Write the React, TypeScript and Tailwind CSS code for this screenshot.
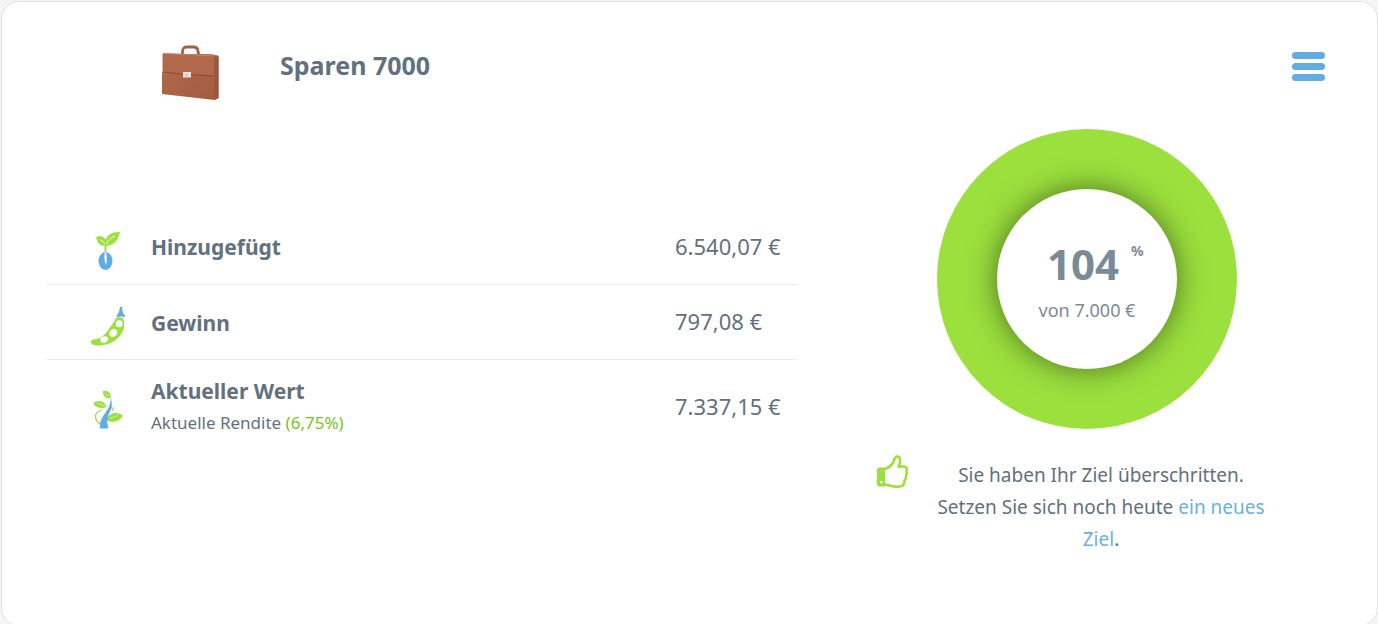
import type { ReactNode } from "react";

function Briefcase() {
  return (
    <svg viewBox="0 0 60 56" className="h-14 w-15" aria-hidden="true">
      <defs>
        <linearGradient id="leather" x1="0" y1="0" x2="1" y2="1">
          <stop offset="0" stopColor="#b06a4b" />
          <stop offset="1" stopColor="#a35c40" />
        </linearGradient>
      </defs>
      <path d="M22.500 10V7q0-5 4-5h7q4 0 4.500 4l.8 4" fill="none" stroke="#a66144" strokeWidth="2.800" />
      <path d="M2.500 8.500 53 9.500 58.500 11V53l-4 2L2 49V28L3 27Z" fill="url(#leather)" />
      <path d="M54.500 10 58.500 11V53l-4 2Z" fill="#995740" />
      <path d="M3 8.500 53 9.500 54 31 31 30 2.500 26.500Z" fill="#b0694a" />
      <path d="M2.500 27 26 29.500 54 31" fill="none" stroke="#8a4832" strokeWidth=".9" />
      <path d="M3 8.700 57 11" stroke="#c58467" strokeWidth=".9" />
      <rect x="23" y="27" width="8" height="5.500" fill="#e9e2de" />
      <path d="M25 30h3" stroke="#b3a9a4" />
    </svg>
  );
}

function Sprout() {
  return (
    <svg viewBox="0 0 50 54" className="h-[54px] w-[50px]" aria-hidden="true">
      <path d="M12 13c5-2 11 0 11 8-7 2-9-1-11-8Z" fill="#9be03d" />
      <path d="M36 8c-9 0-16 3-14 14 9-1 12-6 14-14Z" fill="#9be03d" />
      <path d="M22 21q2-6 9-9M21 20q-2-3-5-4.500" fill="none" stroke="#fff" strokeWidth=".8" />
      <path d="M21.500 28v-8" fill="none" stroke="#9be03d" strokeWidth="2" />
      <ellipse cx="21.500" cy="37" rx="7" ry="9" fill="#60ace3" />
      <path d="M21 28q-1.500 7 .8 13 2-6 0-13" fill="#fff" />
    </svg>
  );
}

function Pod() {
  return (
    <svg viewBox="0 0 50 54" className="h-[54px] w-[50px]" aria-hidden="true">
      <path d="M36 7h2l.6 5 2.900 5q-4-1-9.500 0l3-5Z" fill="#60ace3" />
      <path d="M32 18q3-1.500 7 0c2.500 6 1.500 13-4 19-5 6-13 8.500-22 8.500-5 0-7-3-5.500-5 1-1 3-1 5-1.500 5-1 10-5.500 13-11 2-3 5-6 6.500-10Z" fill="#9be03d" />
      <circle cx="35.200" cy="23.700" r="3.500" fill="#fff" />
      <ellipse cx="29.300" cy="33" rx="4.300" ry="3.600" transform="rotate(-50 29.300 33)" fill="#fff" />
      <ellipse cx="20.300" cy="39.500" rx="4.100" ry="3.100" transform="rotate(-20 20.300 39.500)" fill="#fff" />
    </svg>
  );
}

function Vine() {
  return (
    <svg viewBox="0 0 50 56" className="h-14 w-[50px]" aria-hidden="true">
      <path d="M19 9c5-1 8 2 8 7-5 1-8-1-8-7Z" fill="#9be03d" />
      <path d="M9 21c7-4 11-2 14 4-6 2-11 1-14-4Z" fill="#9be03d" />
      <path d="M39 33.500c-5-4-14-4-17 4.500 8 4 14 1 17-4.500Z" fill="#9be03d" />
      <path d="M18 28q-7 2-6.500 7 .5 5 5 7M26 25q4 1 3 4" fill="none" stroke="#9be03d" strokeWidth="1.300" />
      <path d="M26.300 14c3 9 1 14-1.500 18-2 4-2 9-.3 14.500h-8.500c-1-6 2-11 5.500-16s6-9 4.800-16.500Z" fill="#60ace3" />
      <path d="M21 11l5 4M13 21l8 3M34 33.500l-8 3" stroke="#fff" strokeWidth=".5" />
    </svg>
  );
}

function ThumbUp() {
  return (
    <svg viewBox="0 0 32 34" className="h-[34px] w-8 shrink-0" aria-hidden="true">
      <path d="M2.500 12.500H8v19H2.500Q0 31.500 0 29V15q0-2.500 2.500-2.500Z" fill="#9be03d" />
      <circle cx="4.300" cy="27.300" r="1.300" fill="#fff" />
      <path d="M8 14c5-1 6-4 8-6 1.500-2 1-6.500 4-6.500 4.500 0 3.500 6 1.500 10h6q3 1 2 4 1 3-.5 5 .5 3-1.500 5c0 4-2 6-5 6-6 1-9-1-14.500-2" fill="none" stroke="#9be03d" strokeWidth="2.600" strokeLinejoin="round" strokeLinecap="round" />
    </svg>
  );
}

type Row = { label: string; value: string; icon: ReactNode; note?: ReactNode };

const rows: Row[] = [
  { label: "Hinzugefügt", value: "6.540,07 €", icon: <Sprout /> },
  { label: "Gewinn", value: "797,08 €", icon: <Pod /> },
  {
    label: "Aktueller Wert",
    value: "7.337,15 €",
    icon: <Vine />,
    note: (
      <>
        Aktuelle Rendite <span className="text-[#73c716]">(6,75%)</span>
      </>
    ),
  },
];

function Summary() {
  return (
    <table className="w-full table-fixed border-collapse text-left">
      <colgroup>
        <col className="w-[104px]" />
        <col />
        <col className="w-[122px]" />
      </colgroup>
      <tbody>
        {rows.map((row) => (
          <tr key={row.label} className="border-b border-[#ebebeb] last:border-0">
            <td className={row.note ? "h-[94px] pt-2 pl-[37px]" : "h-[75px] pt-2.5 pl-[37px]"}>{row.icon}</td>
            <th scope="row" className="pt-0.5 text-[21px] leading-8 font-bold">
              {row.label}
              {row.note && <div className="text-[17px] leading-8 font-normal">{row.note}</div>}
            </th>
            <td className="text-[22px] whitespace-nowrap">{row.value}</td>
          </tr>
        ))}
      </tbody>
    </table>
  );
}

function Donut() {
  return (
    <div className="flex size-[300px] items-center justify-center rounded-full bg-[#9be03d]">
      <div className="flex size-[180px] flex-col items-center rounded-full bg-white pt-[47px] text-[#7b8b95] shadow-[0_0_30px_rgba(0,0,0,0.5)]">
        <p className="mr-2 text-[42px] leading-14 font-bold">
          <span className="relative">
            104
            <span className="absolute top-1.5 left-full ml-3 text-sm leading-5">%</span>
          </span>
        </p>
        <p className="text-lg leading-9">von 7.000 €</p>
      </div>
    </div>
  );
}

export default function App() {
  return (
    <div className="bg-[#f5f5f5] pt-px pl-px font-['Noto_Sans',sans-serif] text-[#61717d]">
      <main className="rounded-[18px] border border-[#e2e2e2] bg-white pb-[70px]">
        <header className="flex h-[126px] items-start pr-[52px] pl-[158px]">
          <div className="pt-[43px]">
            <Briefcase />
          </div>
          <h1 className="pt-[43px] pl-[60px] text-[25px] leading-10 font-bold">Sparen 7000</h1>
          <button type="button" aria-label="Menü" className="mt-[50px] ml-auto flex w-[33px] flex-col gap-1">
            <span className="h-[7px] w-full rounded-full bg-[#60ace3]" />
            <span className="h-[7px] w-full rounded-full bg-[#60ace3]" />
            <span className="h-[7px] w-full rounded-full bg-[#60ace3]" />
          </button>
        </header>
        <div className="grid grid-cols-[159fr_116fr]">
          <section className="pt-[81px] pl-[45px]">
            <Summary />
          </section>
          <section className="flex flex-col items-center pt-px">
            <Donut />
            <div className="mt-[26px] flex w-full pr-[108px] pl-20">
              <ThumbUp />
              <p className="ml-6 flex-1 pt-1 text-center text-[19px] leading-8">
                Sie haben Ihr Ziel überschritten.
                <br />
                Setzen Sie sich noch heute{" "}
                <a href="#ziel" className="text-[#6cb0e2]">
                  ein neues Ziel
                </a>
                .
              </p>
            </div>
          </section>
        </div>
      </main>
    </div>
  );
}
